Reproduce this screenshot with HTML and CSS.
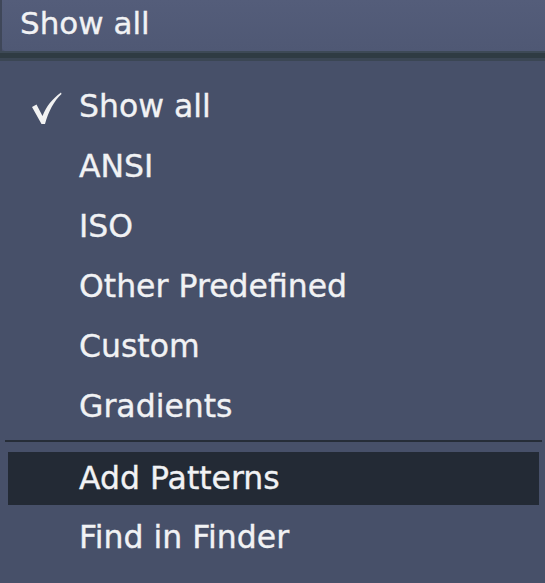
FILE: index.html
```html
<!DOCTYPE html>
<html>
<head>
<meta charset="utf-8">
<link rel="stylesheet" href="styles.css">
</head>
<body>
<div class="screen">
  <div class="select">Show all</div>
  <div class="gap"></div>
  <div class="menu">
    <div class="item">
      <span class="mark">
        <svg width="32" height="36" viewBox="0 0 32 36"><path d="M2,17 L6.5,14.5 L12.5,26 C16,17 22,9 31,2.5 L31.5,4 C24,11 18.5,21 15,34 L11.5,34 Z" fill="#f2f2f2"/></svg>
      </span>
      <span class="label">Show all</span>
    </div>
    <div class="item"><span class="mark"></span><span class="label">ANSI</span></div>
    <div class="item"><span class="mark"></span><span class="label">ISO</span></div>
    <div class="item"><span class="mark"></span><span class="label">Other Predefined</span></div>
    <div class="item"><span class="mark"></span><span class="label">Custom</span></div>
    <div class="item"><span class="mark"></span><span class="label">Gradients</span></div>
    <div class="separator"></div>
    <div class="item short active"><span class="mark"></span><span class="label">Add Patterns</span></div>
    <div class="item short"><span class="mark"></span><span class="label">Find in Finder</span></div>
  </div>
</div>
</body>
</html>
```
FILE: styles.css
```css
html, body {
  margin: 0;
  padding: 0;
}
body {
  width: 545px;
  height: 583px;
  overflow: hidden;
  background: #475069;
  font-family: "DejaVu Sans", "Verdana", sans-serif;
  color: #f1f2f4;
  -webkit-text-stroke: 0.35px #f1f2f4;
}
.screen {
  display: flex;
  flex-direction: column;
  height: 583px;
  background: linear-gradient(to right, #3f4759 0, #3f4759 2px, #475069 2px);
}
.select {
  height: 51px;
  box-sizing: border-box;
  margin-left: 2px;
  padding-left: 18px;
  font-size: 31px;
  line-height: 46px;
  background: linear-gradient(#545d7a, #4f5874);
  border-bottom-left-radius: 4px;
}
.gap {
  height: 10px;
  background: linear-gradient(#3d4956 0, #3d4956 2px, #2f3b43 2px, #2f3b43 7px, #3b4654 7px);
}
.menu {
  flex: 1;
  padding-top: 15px;
  background: #475069;
}
.item {
  display: flex;
  align-items: center;
  height: 60px;
  font-size: 31.5px;
  line-height: 60px;
  padding-left: 30px;
}
.item.short {
  height: 53px;
  line-height: 53px;
  margin-left: 8px;
  margin-right: 6px;
  padding-left: 22px;
}
.item.active {
  background: #232a35;
  margin-bottom: 6px;
}
.mark {
  width: 49px;
  height: 36px;
  display: flex;
  align-items: center;
  margin-top: 4px;
}
.separator {
  height: 2px;
  margin: 4px 3px 10px 5px;
  background: #262d38;
}
```
